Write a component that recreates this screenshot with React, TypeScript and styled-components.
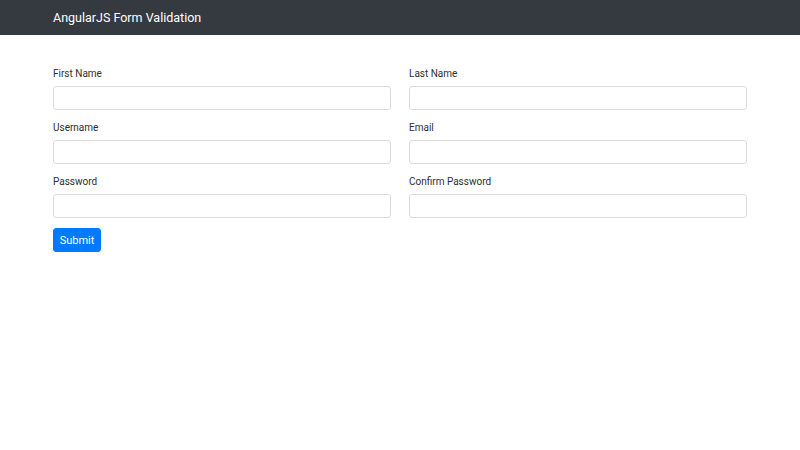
import React from "react";
import styled, { createGlobalStyle } from "styled-components";

const Global = createGlobalStyle`
  html, body { margin: 0; padding: 0; background: #fff; }
  body { font-family: Roboto, "Liberation Sans", Arial, sans-serif; color: #212529; }
  * { box-sizing: border-box; }
`;

const Navbar = styled.nav`
  height: 35px;
  background: #343a40;
  display: flex;
  align-items: center;
`;

const NavInner = styled.div`
  width: 694px;
  margin: 0 auto;
`;

const Brand = styled.span`
  color: #fff;
  font-size: 12.5px;
  line-height: 20px;
`;

const Container = styled.main`
  width: 694px;
  margin: 0 auto;
  padding-top: 31px;
`;

const Grid = styled.div`
  display: grid;
  grid-template-columns: 1fr 1fr;
  column-gap: 18px;
`;

const Group = styled.div`
  display: flex;
  flex-direction: column;
  margin-bottom: 10px;
`;

const Label = styled.label`
  font-size: 10px;
  line-height: 15px;
  margin-bottom: 5px;
  color: #2b2f33;
`;

const Input = styled.input`
  height: 24px;
  width: 100%;
  border: 1px solid #d9dcdf;
  border-radius: 3px;
  background: #fff;
  padding: 0 8px;
  font-family: inherit;
  font-size: 10px;
  outline: none;
`;

const Button = styled.button`
  width: 48px;
  height: 24px;
  background: #007bff;
  border: 1px solid #007bff;
  border-radius: 3px;
  color: #fff;
  font-family: inherit;
  font-size: 11px;
  padding: 0;
`;

const fields: [string, string][] = [
  ["First Name", "text"],
  ["Last Name", "text"],
  ["Username", "text"],
  ["Email", "email"],
  ["Password", "password"],
  ["Confirm Password", "password"],
];

export default function App() {
  return (
    <>
      <Global />
      <Navbar>
        <NavInner>
          <Brand>AngularJS Form Validation</Brand>
        </NavInner>
      </Navbar>
      <Container>
        <form onSubmit={(e) => e.preventDefault()}>
          <Grid>
            {fields.map(([label, type]) => (
              <Group key={label}>
                <Label>{label}</Label>
                <Input type={type} />
              </Group>
            ))}
          </Grid>
          <Button type="submit">Submit</Button>
        </form>
      </Container>
    </>
  );
}
